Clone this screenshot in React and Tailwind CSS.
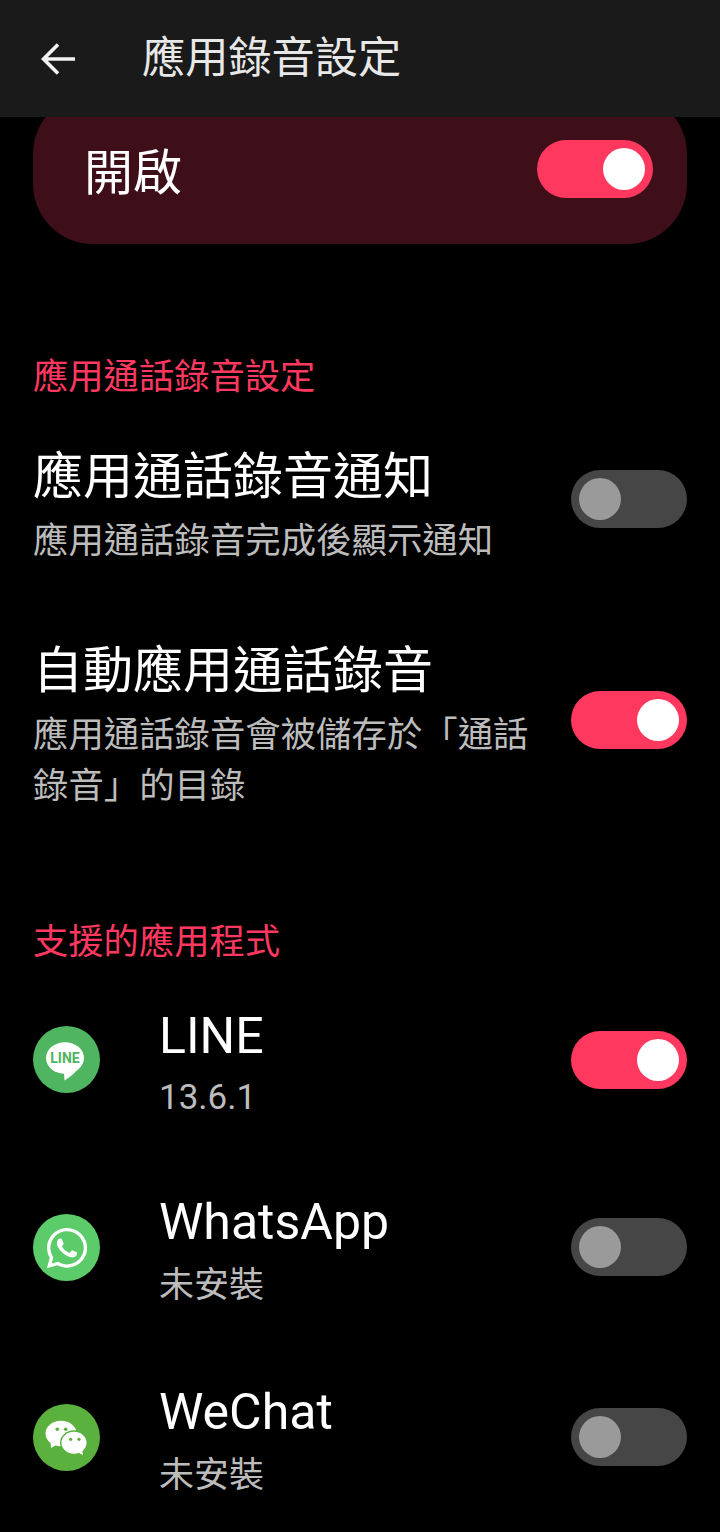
import React from 'react';
import { FaWhatsapp } from 'react-icons/fa';

const Toggle = ({ on }) => (
    <div className={`flex h-[58px] w-[116px] shrink-0 items-center rounded-full px-2 ${on ? 'justify-end bg-[#ff3860]' : 'justify-start bg-[#464646]'}`}>
        <div className={`h-[42px] w-[42px] rounded-full ${on ? 'bg-white' : 'bg-[#9a9a9a]'}`} />
    </div>
);

const SectionLabel = ({ children, className }) => (
    <div className={`h-[50px] text-[35.3px] leading-[50px] text-[#ff3860] ${className}`}>{children}</div>
);

const SettingRow = ({ title, sub, on, className, toggleGap }) => (
    <div className={`flex items-center justify-between ${className}`}>
        <div className="w-[510px]">
            <div className="text-[50px] leading-[66px] text-white">{title}</div>
            <div className="mt-[6px] text-[35.4px] leading-[51px] text-[#bcbcbc]">{sub}</div>
        </div>
        <div className={toggleGap}>
            <Toggle on={on} />
        </div>
    </div>
);

const AppRow = ({ icon, name, sub, on, className, subGap, iconGap, toggleGap }) => (
    <div className={`flex items-center ${className}`}>
        <div className={`flex h-[67px] w-[67px] shrink-0 items-center justify-center ${iconGap}`}>{icon}</div>
        <div className="ml-[59px] flex-1">
            <div className="text-[50px] leading-[66px] text-white">{name}</div>
            <div className={`text-[35px] leading-[51px] text-[#bcbcbc] ${subGap}`}>{sub}</div>
        </div>
        <div className={toggleGap}>
            <Toggle on={on} />
        </div>
    </div>
);

const LineIcon = () => (
    <svg viewBox="0 0 67 67" className="h-[67px] w-[67px]">
        <circle cx="33.5" cy="33.5" r="33.5" fill="#4fb560" />
        <ellipse cx="32" cy="32" rx="19" ry="15.8" fill="#fff" />
        <path d="M25 45 L31 47 L31.5 54.5 C36 52 41 48 44 44 Z" fill="#fff" />
        <text x="32" y="37" textAnchor="middle" fontSize="14" fontWeight="700" fill="#4fb560" fontFamily="Roboto, sans-serif">LINE</text>
    </svg>
);

const WhatsappIcon = () => (
    <div className="flex h-[67px] w-[67px] items-center justify-center rounded-full bg-[#5ccb69] text-white">
        <FaWhatsapp size={46} />
    </div>
);

const WechatIcon = () => (
    <svg viewBox="0 0 67 67" className="h-[67px] w-[67px]">
        <circle cx="33.5" cy="33.5" r="33.5" fill="#5ab13e" />
        <ellipse cx="28" cy="29.5" rx="15.5" ry="12.8" fill="#fff" />
        <path d="M17.5 38 L18 44 L25 40 Z" fill="#fff" />
        <circle cx="24.3" cy="25.3" r="1.8" fill="#5ab13e" />
        <circle cx="32.7" cy="25.3" r="1.8" fill="#5ab13e" />
        <ellipse cx="41" cy="38.7" rx="14" ry="12.4" fill="#5ab13e" />
        <ellipse cx="41" cy="38.7" rx="12.5" ry="11" fill="#fff" />
        <path d="M44 48 L50 51 L49 44 Z" fill="#fff" />
        <circle cx="37.7" cy="35.3" r="1.6" fill="#5ab13e" />
        <circle cx="46" cy="35.3" r="1.6" fill="#5ab13e" />
    </svg>
);

const App = () => {
    return (
        <div className="h-[1532px] w-[720px] overflow-hidden bg-black font-['Roboto','Noto_Sans_CJK_TC',sans-serif]">
            {/* Top bar */}
            <header className="relative z-10 flex h-[117px] items-center bg-[#1a1a1a]">
                <svg viewBox="0 0 36 36" className="ml-[41px] h-[36px] w-[36px]" fill="none" stroke="#f2f2f2" strokeWidth="3.6">
                    <path d="M34 18 H3 M17 3.5 L2.5 18 L17 32.5" />
                </svg>
                <div className="ml-[65px] text-[43.2px] leading-[60px] text-[#e8e8e8]">應用錄音設定</div>
            </header>

            {/* Master switch card */}
            <div className="mx-[33px] -mt-[23px] flex h-[150px] items-center justify-between rounded-[60px] bg-[#3f0f19] pl-[51px] pr-[34px]">
                <div className="pt-[9px] text-[49px] leading-[66px] text-white">開啟</div>
                <Toggle on />
            </div>

            <div className="px-[33px]">
                <SectionLabel className="mt-[108px]">應用通話錄音設定</SectionLabel>
                <SettingRow className="mt-[42px]" toggleGap="mb-[14px]" title="應用通話錄音通知" sub="應用通話錄音完成後顯示通知" />
                <SettingRow className="mt-[71px]" toggleGap="mb-[10px]" title="自動應用通話錄音" sub="應用通話錄音會被儲存於「通話錄音」的目錄" on />

                <SectionLabel className="mt-[105px]">支援的應用程式</SectionLabel>
                <AppRow className="mt-[36px]" iconGap="mb-[7px]" toggleGap="mb-[7px]" icon={<LineIcon />} name="LINE" sub="13.6.1" subGap="mt-[3px]" on />
                <AppRow className="mt-[66px]" iconGap="mb-[5px]" toggleGap="mb-[7px]" icon={<WhatsappIcon />} name="WhatsApp" sub="未安裝" subGap="mt-[5px]" />
                <AppRow className="mt-[68px]" iconGap="mb-[5px]" toggleGap="mb-[7px]" icon={<WechatIcon />} name="WeChat" sub="未安裝" subGap="mt-[5px]" />
            </div>
        </div>
    );
};

export default App;
